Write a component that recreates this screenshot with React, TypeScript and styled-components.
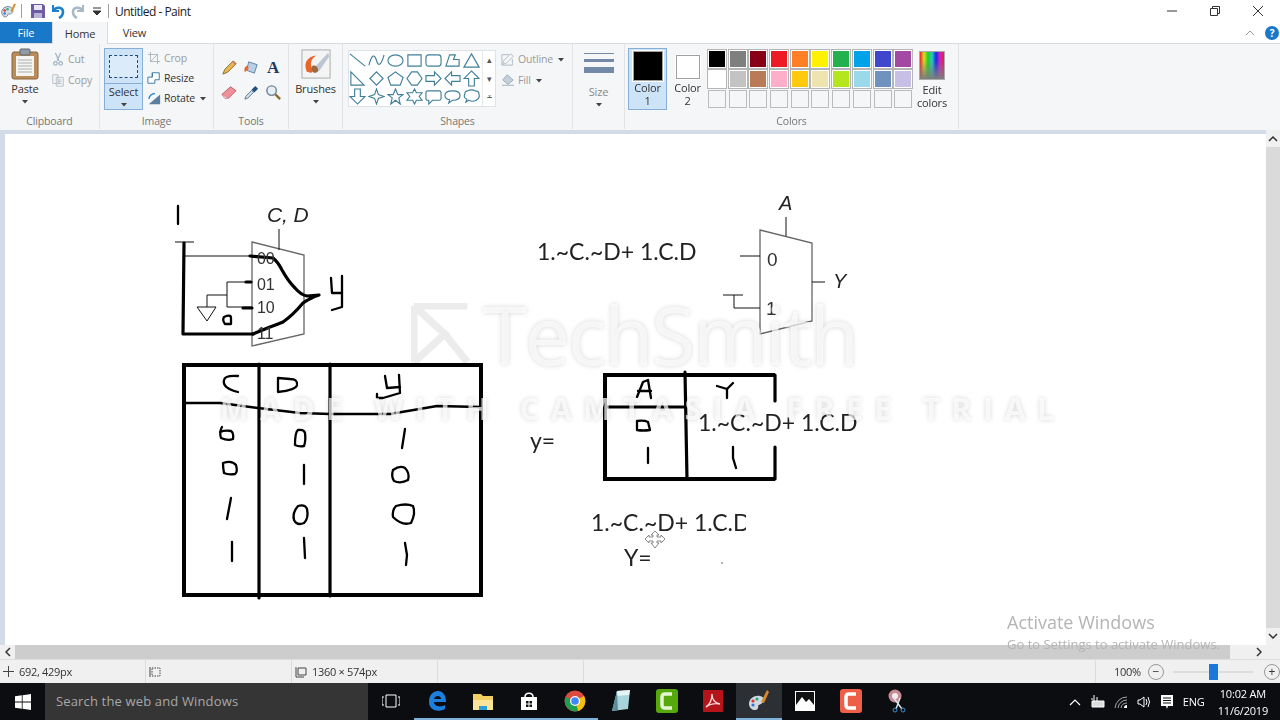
import React from 'react'
import styled, { createGlobalStyle } from 'styled-components'

const GlobalStyle = createGlobalStyle`
    html, body { margin: 0; padding: 0; background: #fff; overflow: hidden; }
    body { font-family: "Open Sans", "Noto Sans", "Liberation Sans", sans-serif; }
`

// @ Palette rows of the Colors group
const PALETTE = [
    '#000000', '#7f7f7f', '#880015', '#ed1c24', '#ff7f27', '#fff200', '#22b14c', '#00a2e8', '#3f48cc', '#a349a4',
    '#ffffff', '#c3c3c3', '#b97a57', '#ffaec9', '#ffc90e', '#efe4b0', '#b5e61d', '#99d9ea', '#7092be', '#c8bfe7',
    '', '', '', '', '', '', '', '', '', '',
]

// @ Shape gallery, each one is drawn in a 18x18 box
const SHAPES = [
    'M1 2L17 15',
    'M1 14C4 2 7 2 9 9S14 14 17 3',
    'M1 9a8 6 0 1 0 16 0a8 6 0 1 0-16 0Z',
    'M2 3H16V15H2Z',
    'M4 3H14Q17 3 17 6V12Q17 15 14 15H4Q1 15 1 12V6Q1 3 4 3Z',
    'M2 15L6 3H12L10 8H16V15Z',
    'M9 2L17 16H1Z',
    'M2 2V16H16Z',
    'M9 2L16 9L9 16L2 9Z',
    'M9 2L17 8L14 16H4L1 8Z',
    'M6 2H12L17 9L12 16H6L1 9Z',
    'M1 6H10V2L17 9L10 16V12H1Z',
    'M17 6H8V2L1 9L8 16V12H17Z',
    'M9 1L17 9H12V17H6V9H1Z',
    'M6 1H12V9H17L9 17L1 9H6Z',
    'M9 1L11 7L17 9L11 11L9 17L7 11L1 9L7 7Z',
    'M9 1L11.5 7H17L12.5 10.500L14 17L9 13L4 17L5.500 10.500L1 7H6.500Z',
    'M9 1L11 5H17L14 9L17 13H11L9 17L7 13H1L4 9L1 5H7Z',
    'M3 3H15Q17 3 17 5V11Q17 13 15 13H8L4 17V13H3Q1 13 1 11V5Q1 3 3 3Z',
    'M9 3C14 3 17 5 17 8S14 13 9 13L5 16L6 12.500C3 12 1 10 1 8C1 5 4 3 9 3Z',
    'M5 3Q9 1 13 3Q17 3 17 7Q18 11 14 13Q10 15 6 13L3 15L4 12Q0 10 2 6Q2 3 5 3Z',
]

// @ Hand written marks, in page coordinates
const THICK = [
    'M184 243L183 334L253 334',
    'M250 256L273 258Q278 262 282 270Q288 281 295 288Q301 295 307 296L319 295Q310 298 303 303Q293 315 283 322Q276 325 270 327L253 334',
    'M251 282H246', 'M252 308H243',
    'M259 364V598', 'M330 364V596',
    'M606 407H684', 'M685 372L687 479',
    'M775 375V401', 'M775 447V479',
]
const THIN_INK = [
    'M331 278L332 293H342', 'M342 276V307L332 310',
    'M238 376Q225 375 224 380Q222 388 238 392',
    'M278 378V392Q296 390 297 385Q298 379 290 379Z',
    'M385 376L387 388L400 387', 'M399 375L400 393L383 398H377V394',
    'M222 427Q219 432 221 438Q228 441 233 439Q234 433 231 431Q225 430 220 432',
    'M295 445Q295 432 298 430Q304 429 305 433Q306 441 304 446Q299 447 295 445Z',
    'M405 429L402 448',
    'M223 463Q232 460 236 465Q238 472 235 474Q228 475 224 473Q223 468 223 463Z',
    'M304 465V484',
    'M393 470Q400 465 405 468Q410 473 408 480Q401 484 394 481Q391 476 393 470Z',
    'M231 498L227 519',
    'M298 506Q305 504 307 509Q309 518 304 523Q297 526 294 520Q292 513 298 506Z',
    'M396 506Q406 503 413 506Q416 513 411 523Q402 526 393 517Q392 510 396 506Z',
    'M232 542V561',
    'M304 538L305 558',
    'M405 543L407 555L406 565',
    'M637 397L643 382L648 380L651 398', 'M638 391H651',
    'M717 386L727 389L733 383', 'M727 389V398',
    'M637 421Q644 420 648 422L650 430Q643 431 637 430Z',
    'M648 448V463',
    'M733 447V458L736 468',
    'M224 317Q231 314 231 318V324H225Q222 320 224 317Z',
    'M178 206V224',
    'M185 403H220L258 408L300 413L330 414H390L437 406L480 407',
]
const HAIR = [
    'M175 242H194', 'M184 256H252', 'M279 250V229',
    'M252 282H227V307H252', 'M227 295H207V307', 'M197 307H216L207 321Z',
    'M786 217V236', 'M740 256H760', 'M812 282H825',
    'M723 295H743', 'M734 295V308H760',
]

const LeftTitleIcons = () => (
    <>
        <QuickIcon $w={17} viewBox="0 0 18 18">
            <path d="M2 11C1 6 6 3 10 4S15 9 12 11S9 10 8 13S3 15 2 11Z" fill="#d8dfe8" stroke="#6a7c8e" />
            <circle cx="5" cy="8" r="1.300" fill="#d33" /><circle cx="8" cy="6.500" r="1.300" fill="#2a7" /><circle cx="5" cy="11" r="1.300" fill="#37c" />
            <path d="M12 9L16 1" stroke="#d88a2a" strokeWidth="2" />
        </QuickIcon>
        <TitleRule />
        <QuickIcon $w={16} viewBox="0 0 16 16">
            <path d="M1 1H13L15 3V15H1Z" fill="#6f5aa8" />
            <path d="M4 2H12V7H4Z" fill="#e8e8f2" /><path d="M4 10H12V15H4Z" fill="#b8b4d4" />
        </QuickIcon>
        <QuickIcon $w={16} viewBox="0 0 16 16">
            <path d="M3 2V8H9" fill="none" stroke="#1b80d0" strokeWidth="2" />
            <path d="M3 8C6 3 13 4 13 9C13 12 11 14 9 15" fill="none" stroke="#1b80d0" strokeWidth="2.600" />
        </QuickIcon>
        <QuickIcon $w={16} viewBox="0 0 16 16">
            <path d="M13 2V8H7" fill="none" stroke="#a9b8c6" strokeWidth="2" />
            <path d="M13 8C10 3 3 4 3 9C3 12 5 14 7 15" fill="none" stroke="#a9b8c6" strokeWidth="2.600" />
        </QuickIcon>
        <QuickIcon $w={8} $side={3} viewBox="0 0 8 8">
            <path d="M0 1H8M0 4H8L4 8Z" stroke="#333" fill="#333" />
        </QuickIcon>
        <TitleRule />
    </>
)

const Caret = () => (
    <CaretIcon viewBox="0 0 6 4"><path d="M0 0H6L3 3.500Z" fill="#444" /></CaretIcon>
)

const SmallAction = ({ icon, label, off, caret }: { icon: React.ReactNode; label: string; off?: boolean; caret?: boolean }) => (
    <ActionRow $off={off}>
        <ActionGlyph viewBox="0 0 16 16">{icon}</ActionGlyph>
        <span>{label}</span>
        {caret && <Caret />}
    </ActionRow>
)

const Ribbon = () => (
    <RibbonBar>
        <Group $w={100}>
            <GroupBody $pad="2px 0 0 4px">
                <BigTool $w={42}>
                    <BigGlyph viewBox="0 0 30 32">
                        <rect x="2" y="4" width="26" height="27" rx="2" fill="#b98d5b" stroke="#8a653a" />
                        <rect x="6" y="8" width="18" height="20" fill="#f6f4ee" />
                        <path d="M8 12H22M8 15H22M8 18H22M8 21H22M8 24H22" stroke="#a8b0b8" />
                        <rect x="10" y="1" width="10" height="6" rx="1" fill="#8f9aa5" stroke="#5d6670" />
                    </BigGlyph>
                    <span>Paste</span>
                    <Caret />
                </BigTool>
                <ActionStack $gap={4}>
                    <SmallAction off label="Cut" icon={<path d="M5 1L9 10M11 1L7 10M5 11a2 2 0 1 0 .1 0M11 11a2 2 0 1 0 .1 0" fill="none" stroke="#9db0c4" strokeWidth="1.400" />} />
                    <SmallAction off label="Copy" icon={<path d="M2 2H8V12H2ZM6 5H14V15H6ZM8 8H12M8 10H12M8 12H12" fill="#f3f5f7" stroke="#b5bdc6" />} />
                </ActionStack>
            </GroupBody>
            <GroupLabel>Clipboard</GroupLabel>
        </Group>
        <Group $w={114}>
            <GroupBody $pad="0 0 0 4px">
                <SelectTool>
                    <SelectTop><Marquee /></SelectTop>
                    <SelectBottom><span>Select</span><Caret /></SelectBottom>
                </SelectTool>
                <ActionStack $gap={3} $pad="5px 0 0 4px">
                    <SmallAction off label="Crop" icon={<path d="M4 1V12H15M1 4H12V15M4 12L12 4" fill="none" stroke="#a9b3bd" />} />
                    <SmallAction label="Resize" icon={<path d="M6 2H14V10H9V14H1V7H6ZM6 7V2" fill="#fff" stroke="#2f6f9f" />} />
                    <SmallAction caret label="Rotate" icon={<><path d="M2 15L15 4V15Z" fill="#5d7f9f" /><path d="M2 9C3 5 6 3 9 3" fill="none" stroke="#1b80d0" strokeWidth="1.500" /></>} />
                </ActionStack>
            </GroupBody>
            <GroupLabel>Image</GroupLabel>
        </Group>
        <Group $w={75}>
            <ToolGrid>
                <ToolIcon viewBox="0 0 18 18"><path d="M2 16L4 11L13 2L16 5L7 14Z" fill="#e8b850" stroke="#8a6a30" /><path d="M12 3L15 6L16 5L13 2Z" fill="#d66" /></ToolIcon>
                <ToolIcon viewBox="0 0 18 18"><path d="M6 3L15 6L12 15L4 12Z" fill="#b9cfe6" stroke="#62829f" /><path d="M5 7C1 8 1 12 2 14L6 10Z" fill="#e8662a" /></ToolIcon>
                <ToolLetter>A</ToolLetter>
                <ToolIcon viewBox="0 0 18 18"><path d="M1 11L10 3L16 7L8 15L4 15Z" fill="#ee8f9a" stroke="#b8606a" /><path d="M1 11L5 14L8 15L4 15Z" fill="#e6d0d0" /></ToolIcon>
                <ToolIcon viewBox="0 0 18 18"><path d="M2 16L3 13L9 7L11 9L5 15Z" fill="#cfe0ee" stroke="#60788c" /><path d="M9 6L13 2L16 5L12 9Z" fill="#21507f" /></ToolIcon>
                <ToolIcon viewBox="0 0 18 18"><circle cx="7" cy="7" r="5" fill="#e6eef6" stroke="#6f8296" strokeWidth="1.500" /><path d="M11 11L16 16" stroke="#8a6a30" strokeWidth="2.500" /></ToolIcon>
            </ToolGrid>
            <GroupLabel>Tools</GroupLabel>
        </Group>
        <Group $w={54}>
            <GroupBody $pad="2px 0 0 0">
                <BigTool $w={53}>
                    <BigGlyph viewBox="0 0 32 32">
                        <rect x="1" y="1" width="30" height="30" fill="#f4f4f4" stroke="#a8a8a8" />
                        <path d="M6 24C2 14 8 8 16 7C11 11 9 15 12 21C14 24 11 27 6 24Z" fill="#e8662a" />
                        <path d="M14 20L29 4L30 8L19 24Z" fill="#bcc6d2" />
                        <path d="M12 18C16 16 19 20 18 24C15 27 10 25 12 18Z" fill="#9b6a3a" />
                    </BigGlyph>
                    <span>Brushes</span>
                    <Caret />
                </BigTool>
            </GroupBody>
            <GroupLabel>&nbsp;</GroupLabel>
        </Group>
        <Group $w={230}>
            <GroupBody $pad="2px 0 0 5px">
                <Gallery>
                    <ShapeGrid>
                        {SHAPES.map((d, i) => (
                            <ShapeIcon key={i} viewBox="0 0 18 18"><path d={d} /></ShapeIcon>
                        ))}
                    </ShapeGrid>
                    <GalleryScroll>
                        <span>▴</span><span>▾</span><span>⩡</span>
                    </GalleryScroll>
                </Gallery>
                <ActionStack $gap={4} $pad="4px 0 0 5px">
                    <SmallAction off caret label="Outline" icon={<path d="M2 14L3 10L11 2L14 5L6 13ZM1 3H9M1 3V15H13V8" fill="none" stroke="#aab5c0" />} />
                    <SmallAction off caret label="Fill" icon={<path d="M7 2L14 8L8 13L2 8ZM1 14H15" fill="#c3cfdb" stroke="#9aa8b6" />} />
                </ActionStack>
            </GroupBody>
            <GroupLabel>Shapes</GroupLabel>
        </Group>
        <Group $w={52}>
            <GroupBody $pad="0">
                <SizeTool>
                    <SizeLines>
                        <SizeLine $h={1} /><SizeLine $h={3} /><SizeLine $h={6} />
                    </SizeLines>
                    <span>Size</span>
                    <Caret />
                </SizeTool>
            </GroupBody>
            <GroupLabel>&nbsp;</GroupLabel>
        </Group>
        <Group $w={334}>
            <GroupBody $pad="0 0 0 3px">
                <ColorPick $on>
                    <ColorWell $size={28} $fill="#000000" />
                    <span>Color<br />1</span>
                </ColorPick>
                <ColorPick>
                    <ColorWell $size={22} $fill="#ffffff" />
                    <span>Color<br />2</span>
                </ColorPick>
                <Palette>
                    {PALETTE.map((c, i) => <Swatch key={i} $fill={c} />)}
                </Palette>
                <EditColors>
                    <Spectrum />
                    <span>Edit<br />colors</span>
                </EditColors>
            </GroupBody>
            <GroupLabel>Colors</GroupLabel>
        </Group>
    </RibbonBar>
)

const Drawing = () => (
    <Sheet viewBox="0 134 1261 510">
        <g fill="none" stroke="#000" strokeWidth="4">
            <path d="M184 365H481V595H184Z" />
            <path d="M775 375H605V479H775" />
        </g>
        <g fill="none" stroke="#666" strokeWidth="1.300">
            <path d="M252 242L304 255V334L252 346Z" />
            <path d="M760 230L812 243V321L760 334Z" />
        </g>
        <g fill="none" stroke="#111" strokeWidth="1" >
            {HAIR.map((d, i) => <path key={i} d={d} />)}
        </g>
        <g fill="none" stroke="#000" strokeWidth="3.200" strokeLinejoin="round" strokeLinecap="round">
            {THICK.map((d, i) => <path key={i} d={d} />)}
        </g>
        <g fill="none" stroke="#000" strokeWidth="2.300" strokeLinejoin="round" strokeLinecap="round">
            {THIN_INK.map((d, i) => <path key={i} d={d} />)}
        </g>
        <PinLabel x="257" y="264">00</PinLabel>
        <PinLabel x="257" y="290">01</PinLabel>
        <PinLabel x="257" y="313">10</PinLabel>
        <PinLabel x="257" y="339">11</PinLabel>
        <PinLabel x="767" y="266" $size={19}>0</PinLabel>
        <PinLabel x="766" y="315" $size={19}>1</PinLabel>
        <SignalLabel x="267" y="222" $size={21}>C, D</SignalLabel>
        <SignalLabel x="779" y="210">A</SignalLabel>
        <SignalLabel x="833" y="288">Y</SignalLabel>
        <Formula x="537" y="260">1.~C.~D+ 1.C.D</Formula>
        <Formula x="698" y="431">1.~C.~D+ 1.C.D</Formula>
        <Formula x="591" y="531">1.~C.~D+ 1.C.D</Formula>
        <Formula x="530" y="449">y=</Formula>
        <Formula x="624" y="566">Y=</Formula>
        <rect x="746" y="512" width="8" height="26" fill="#fff" />
        <circle cx="722" cy="563" r="0.800" fill="#555" />
        <path d="M655 531L659 535H657V537H661V535L665 539L661 543V541H657V543H659L655 548L651 543H653V541H649V543L645 539L649 535V537H653V535H651Z" fill="#fff" stroke="#888" />
    </Sheet>
)

const Taskbar = () => (
    <TaskbarRow>
        <StartSlot>
            <svg width="16" height="16" viewBox="0 0 16 16"><path d="M0 2.300L6.800 1.300V7.600H0ZM7.600 1.200L16 0V7.600H7.600ZM0 8.400H6.800V14.700L0 13.700ZM7.600 8.400H16V16L7.600 14.800Z" fill="#fff" /></svg>
        </StartSlot>
        <SearchBox>Search the web and Windows</SearchBox>
        <TaskSlot>
            <svg width="18" height="14" viewBox="0 0 18 14"><path d="M4 1H14V13H4ZM2 3H0V11H2M16 3H18V11H16" fill="none" stroke="#fff" /></svg>
        </TaskSlot>
        <TaskSlot $run>
            <svg width="20" height="22" viewBox="0 0 20 22"><path d="M2 12C2 5 6 1 11 1C16 1 19 5 19 12H7C7 16 13 18 18 15V19C11 23 2 20 2 12ZM7 9H14C14 5 8 5 7 9Z" fill="#1b7fe0" /></svg>
        </TaskSlot>
        <TaskSlot $run>
            <svg width="20" height="20" viewBox="0 0 20 20"><path d="M0 3H8L10 5H20V19H0Z" fill="#f3cf62" /><path d="M0 9H20V19H14V15H6V19H0Z" fill="#fbe49a" /><path d="M6 15H14V19H6Z" fill="#2a9fd8" /></svg>
        </TaskSlot>
        <TaskSlot $run>
            <svg width="18" height="20" viewBox="0 0 18 20"><path d="M1 6H17V19H1Z" fill="#fff" /><path d="M5 6C5 1 13 1 13 6" fill="none" stroke="#fff" strokeWidth="1.500" /><path d="M6 10H8.500V12.500H6ZM9.500 10H12V12.500H9.500ZM6 13.500H8.500V16H6ZM9.500 13.500H12V16H9.500Z" fill="#111" /></svg>
        </TaskSlot>
        <TaskSlot $run>
            <svg width="22" height="22" viewBox="0 0 22 22">
                <circle cx="11" cy="11" r="10.500" fill="#dd4b3e" />
                <path d="M11 11L20 6A10.500 10.500 0 0 1 14 21Z" fill="#f4c20d" />
                <path d="M11 11L14 21A10.500 10.500 0 0 1 1.500 7Z" fill="#1e9e50" />
                <circle cx="11" cy="11" r="5" fill="#fff" /><circle cx="11" cy="11" r="3.800" fill="#4285f4" />
            </svg>
        </TaskSlot>
        <TaskSlot>
            <svg width="20" height="24" viewBox="0 0 20 24"><path d="M6 2L19 1L17 20L1 22Z" fill="#a9d4dc" /><path d="M6 2L19 1L18 6L5 7Z" fill="#e6f3f5" /><path d="M1 22L6 2L7 21Z" fill="#5b8f9c" /></svg>
        </TaskSlot>
        <TaskSlot>
            <svg width="22" height="24" viewBox="0 0 22 24"><rect width="22" height="24" rx="3" fill="#56a80c" /><path d="M16 5H9Q6 5 6 8V16Q6 19 9 19H16" fill="none" stroke="#e4f5d2" strokeWidth="3.500" /></svg>
        </TaskSlot>
        <TaskSlot>
            <svg width="20" height="22" viewBox="0 0 20 22"><rect width="20" height="22" rx="1" fill="#b3151b" /><path d="M3 17C7 15 9 9 9 4C9 9 12 13 17 14C12 13 7 14 3 17Z" fill="none" stroke="#f6d6d6" strokeWidth="1.400" /></svg>
        </TaskSlot>
        <TaskSlot $active>
            <svg width="22" height="24" viewBox="0 0 22 24">
                <path d="M1 15C1 9 7 6 12 7S17 13 13 15S11 15 10 19S1 21 1 15Z" fill="#cfd8e2" />
                <circle cx="5" cy="12" r="1.600" fill="#d33" /><circle cx="9" cy="10" r="1.600" fill="#2a7" /><circle cx="5" cy="16" r="1.600" fill="#37c" />
                <path d="M13 13L19 1L21 3L16 14Z" fill="#d88a2a" />
            </svg>
        </TaskSlot>
        <TaskSlot>
            <svg width="20" height="20" viewBox="0 0 20 20"><rect width="20" height="20" fill="#fff" /><rect x="1" y="1" width="18" height="18" fill="#111" /><path d="M1 19V14L7 6L11 11L14 8L19 14V19Z" fill="#fff" /></svg>
        </TaskSlot>
        <TaskSlot>
            <svg width="22" height="24" viewBox="0 0 22 24"><rect width="22" height="24" rx="3" fill="#ee5f47" /><path d="M16 5H9Q6 5 6 8V16Q6 19 9 19H16" fill="none" stroke="#fff" strokeWidth="3.500" /></svg>
        </TaskSlot>
        <TaskSlot>
            <svg width="20" height="24" viewBox="0 0 20 24">
                <circle cx="8" cy="7" r="6.500" fill="#c88a94" /><circle cx="8" cy="7" r="3" fill="#eee" />
                <path d="M6 8L15 20M13 9L9 20" stroke="#dfe6ec" strokeWidth="1.400" />
                <circle cx="8" cy="21" r="2" fill="none" stroke="#3d8fd0" /><circle cx="16" cy="21" r="2" fill="none" stroke="#3d8fd0" />
            </svg>
        </TaskSlot>
        <Tray>
            <TrayIcon viewBox="0 0 14 14"><path d="M2 10L7 5L12 10" fill="none" stroke="#fff" strokeWidth="1.200" /></TrayIcon>
            <TrayIcon viewBox="0 0 14 14"><path d="M1 6H13V12H1ZM3 2V6M6 2V6M4 1H2M2 4H0" fill="#ddd" stroke="#fff" /></TrayIcon>
            <TrayIcon viewBox="0 0 14 14"><path d="M1 13A12 12 0 0 1 13 2M4 13A9 9 0 0 1 13 5M7 13A6 6 0 0 1 13 8" fill="none" stroke="#aaa" /><path d="M10 13A3 3 0 0 1 13 10V13Z" fill="#fff" /></TrayIcon>
            <TrayIcon viewBox="0 0 14 14"><path d="M1 5H3L7 2V12L3 9H1ZM9 4Q11 7 9 10M11 2Q14 7 11 12" fill="none" stroke="#fff" /></TrayIcon>
            <TrayIcon viewBox="0 0 14 14"><path d="M1 0H13V11H8L7 14L6 11H1Z" fill="#fff" /><path d="M3 3H11M3 5.500H11M3 8H11" stroke="#111" /></TrayIcon>
            <TrayText>ENG</TrayText>
            <Clock>10:02 AM<br />11/6/2019</Clock>
        </Tray>
    </TaskbarRow>
)

const App = () => {
    return (
        <Page>
            <GlobalStyle />
            <TitleBar>
                <LeftTitleIcons />
                <TitleText>Untitled - Paint</TitleText>
                <WindowButtons>
                    <WinGlyph viewBox="0 0 12 12"><path d="M1 6H11" stroke="#333" /></WinGlyph>
                    <WinGlyph viewBox="0 0 12 12"><path d="M1.500 3.500H8.500V10.500H1.500ZM3.500 3.500V1.500H10.500V8.500H8.500" fill="none" stroke="#333" /></WinGlyph>
                    <WinGlyph viewBox="0 0 12 12"><path d="M1 1L11 11M11 1L1 11" stroke="#333" /></WinGlyph>
                </WindowButtons>
            </TitleBar>
            <TabRow>
                <FileTab>File</FileTab>
                <HomeTab>Home</HomeTab>
                <ViewTab>View</ViewTab>
                <TabEnd>
                    <svg width="10" height="6" viewBox="0 0 10 6"><path d="M1 5L5 1L9 5" fill="none" stroke="#999" /></svg>
                    <HelpDot>?</HelpDot>
                </TabEnd>
            </TabRow>
            <Ribbon />
            <Workspace>
                <CanvasColumn>
                    <Canvas><Drawing /></Canvas>
                    <VScroll>
                        <svg width="10" height="6" viewBox="0 0 10 6"><path d="M1 5L5 1L9 5" fill="none" stroke="#333" strokeWidth="1.500" /></svg>
                        <VThumb />
                        <svg width="10" height="6" viewBox="0 0 10 6"><path d="M1 1L5 5L9 1" fill="none" stroke="#333" strokeWidth="1.500" /></svg>
                    </VScroll>
                </CanvasColumn>
                <HScroll>
                    <svg width="6" height="10" viewBox="0 0 6 10"><path d="M5 1L1 5L5 9" fill="none" stroke="#333" strokeWidth="1.500" /></svg>
                    <HThumb />
                    <svg width="6" height="10" viewBox="0 0 6 10"><path d="M1 1L5 5L1 9" fill="none" stroke="#333" strokeWidth="1.500" /></svg>
                </HScroll>
            </Workspace>
            <StatusBar>
                <StatusCell>
                    <svg width="11" height="11" viewBox="0 0 11 11"><path d="M5.500 0V11M0 5.500H11" stroke="#444" /></svg>
                    692, 429px
                </StatusCell>
                <StatusCell>
                    <svg width="12" height="12" viewBox="0 0 12 12"><path d="M3 2H11V10H3Z" fill="none" stroke="#444" strokeDasharray="1.500 1" /><path d="M1 1V11" stroke="#444" /></svg>
                </StatusCell>
                <StatusCell>
                    <svg width="12" height="12" viewBox="0 0 12 12"><path d="M3 2H11V9H3Z" fill="none" stroke="#444" /><path d="M1 1V11H9" fill="none" stroke="#444" /></svg>
                    1360 × 574px
                </StatusCell>
                <StatusCell />
                <ZoomBox>
                    <span>100%</span>
                    <ZoomRound>−</ZoomRound>
                    <ZoomTrack><ZoomThumb /></ZoomTrack>
                    <ZoomRound>+</ZoomRound>
                </ZoomBox>
            </StatusBar>
            <Taskbar />
            <Watermark>
                <MarkLogo viewBox="0 0 66 66">
                    <path d="M3 3H60M3 3V63M3 3L36 33L3 63" fill="none" stroke="#000" strokeWidth="8" />
                    <path d="M36 33L60 63" fill="none" stroke="#000" strokeWidth="8" />
                </MarkLogo>
                <MarkName>TechSmith</MarkName>
                <MarkLine>MADE WITH CAMTASIA FREE TRIAL</MarkLine>
            </Watermark>
            <ActivateNote>
                <strong>Activate Windows</strong>
                <small>Go to Settings to activate Windows.</small>
            </ActivateNote>
        </Page>
    )
}

export default App

const Page = styled.div`
    position: relative;
    width: 1280px;
    height: 720px;
    overflow: hidden;
    display: flex;
    flex-direction: column;
    color: #333;
    font-size: 11px;
    letter-spacing: -0.150px;
    filter: blur(0.35px);
`

const TitleBar = styled.div`
    height: 22px;
    display: flex;
    align-items: center;
    gap: 4px;
    background: #fff;
`

const QuickIcon = styled.svg<{ $w: number; $side?: number }>`
    width: ${p => p.$w}px;
    height: ${p => p.$w}px;
    margin: 0 ${p => p.$side || 0}px;
`

const TitleRule = styled.i`
    width: 1px;
    height: 14px;
    background: #a0a0a0;
    margin-right: 4px;
`

const TitleText = styled.span`
    font-size: 12px;
    color: #222;
    margin-left: -2px;
    letter-spacing: -0.500px;
`

const WindowButtons = styled.div`
    margin-left: auto;
    display: flex;
    gap: 31px;
    padding-right: 16px;
`

const WinGlyph = styled.svg`
    width: 12px;
    height: 12px;
`

const TabRow = styled.div`
    height: 21px;
    display: flex;
    align-items: stretch;
    background: #fff;
    border-bottom: 1px solid #dadbdc;
    font-size: 11px;
`

const FileTab = styled.div`
    width: 52px;
    background: #1a78c8;
    color: #fff;
    display: flex;
    align-items: center;
    justify-content: center;
`

const HomeTab = styled.div`
    width: 54px;
    margin-bottom: -1px;
    background: #f5f6f7;
    border: solid #dadbdc;
    border-width: 0 1px;
    display: flex;
    align-items: center;
    justify-content: center;
`

const ViewTab = styled.div`
    width: 53px;
    display: flex;
    align-items: center;
    justify-content: center;
`

const TabEnd = styled.div`
    margin-left: auto;
    display: flex;
    align-items: center;
    gap: 10px;
    margin-right: 1px;
`

const HelpDot = styled.span`
    width: 14px;
    height: 14px;
    border-radius: 50%;
    background: #1a78c8;
    color: #fff;
    font-weight: 700;
    font-size: 10px;
    text-align: center;
    line-height: 14px;
`

const RibbonBar = styled.div`
    height: 86px;
    display: flex;
    background: #f5f6f7;
`

const Group = styled.div<{ $w: number }>`
    width: ${p => p.$w}px;
    box-sizing: border-box;
    display: flex;
    flex-direction: column;
    border-right: 1px solid #e2e3e4;
    margin-bottom: 1px;
`

const GroupBody = styled.div<{ $pad: string }>`
    flex: 1;
    display: flex;
    align-items: flex-start;
    padding: ${p => p.$pad};
    min-height: 0;
`

const GroupLabel = styled.div`
    height: 15px;
    line-height: 14px;
    text-align: center;
    color: #767676;
    font-size: 10.500px;
`

const BigTool = styled.div<{ $w: number }>`
    width: ${p => p.$w}px;
    display: flex;
    flex-direction: column;
    align-items: center;
    line-height: 14px;
    padding-top: 2px;
`

const BigGlyph = styled.svg`
    width: 30px;
    height: 32px;
    margin-bottom: 2px;
`

const CaretIcon = styled.svg`
    width: 6px;
    height: 4px;
    margin: 4px 0 0 0;
    flex: none;
`

const ActionStack = styled.div<{ $gap: number; $pad?: string }>`
    display: flex;
    flex-direction: column;
    gap: ${p => p.$gap}px;
    padding: ${p => p.$pad || '4px 0 0 5px'};
`

const ActionRow = styled.div<{ $off?: boolean }>`
    height: 17px;
    display: flex;
    align-items: center;
    gap: 3px;
    color: ${p => (p.$off ? '#9a9a9a' : '#333')};
    font-size: 10.500px;
    svg:last-child { margin: 2px 0 0 2px; }
`

const ActionGlyph = styled.svg`
    width: 14px;
    height: 14px;
    flex: none;
`

const SelectTool = styled.div`
    width: 39px;
    height: 62px;
    box-sizing: border-box;
    border: 1px solid #86afd8;
    background: #cde4f8;
    margin-top: 4px;
    display: flex;
    flex-direction: column;
`

const SelectTop = styled.div`
    height: 34px;
    border-bottom: 1px solid #86afd8;
    display: flex;
    align-items: center;
    justify-content: center;
`

const Marquee = styled.div`
    width: 27px;
    height: 21px;
    border: 1px dashed #244a78;
    background: #dcebf9;
`

const SelectBottom = styled.div`
    flex: 1;
    display: flex;
    flex-direction: column;
    align-items: center;
    padding-top: 0;
    line-height: 15px;
`

const ToolGrid = styled.div`
    flex: 1;
    display: grid;
    grid-template-columns: repeat(3, 22px);
    grid-template-rows: repeat(2, 25px);
    justify-content: center;
    align-content: start;
    padding-top: 11px;
    align-items: center;
    justify-items: center;
`

const ToolIcon = styled.svg`
    width: 17px;
    height: 17px;
`

const ToolLetter = styled.span`
    font-family: "Liberation Serif", serif;
    font-weight: 700;
    font-size: 17px;
    color: #1f3a5f;
`

const Gallery = styled.div`
    width: 148px;
    height: 57px;
    margin-top: 4px;
    box-sizing: border-box;
    background: #fff;
    border: 1px solid #dfe3e8;
    display: flex;
`

const ShapeGrid = styled.div`
    width: 133px;
    display: grid;
    grid-template-columns: repeat(7, 19px);
    grid-auto-rows: 18px;
    align-content: center;
`

const ShapeIcon = styled.svg`
    width: 17px;
    height: 17px;
    fill: none;
    stroke: #3f7f98;
    stroke-width: 1.200;
`

const GalleryScroll = styled.div`
    flex: 1;
    border-left: 1px solid #e7e9ec;
    display: flex;
    flex-direction: column;
    align-items: center;
    justify-content: space-between;
    font-size: 9px;
    line-height: 18px;
    color: #555;
`

const SizeTool = styled.div`
    flex: 1;
    display: flex;
    flex-direction: column;
    align-items: center;
    padding-top: 9px;
    color: #888;
    line-height: 14px;
`

const SizeLines = styled.div`
    width: 30px;
    height: 29px;
    margin-bottom: 3px;
    display: flex;
    flex-direction: column;
    gap: 5px;
`

const SizeLine = styled.i<{ $h: number }>`
    display: block;
    height: ${p => p.$h}px;
    background: #7488a8;
`

const ColorPick = styled.div<{ $on?: boolean }>`
    width: 39px;
    height: 62px;
    margin: 4px 1px 0 0;
    box-sizing: border-box;
    border: 1px solid ${p => (p.$on ? '#86afd8' : 'transparent')};
    background: ${p => (p.$on ? '#cde4f8' : 'transparent')};
    display: flex;
    flex-direction: column;
    align-items: center;
    text-align: center;
    line-height: 13px;
    span { margin-top: auto; margin-bottom: 2px; }
`

const ColorWell = styled.div<{ $size: number; $fill: string }>`
    width: ${p => p.$size}px;
    height: ${p => p.$size}px;
    margin-top: ${p => (p.$size === 28 ? 2 : 6)}px;
    background: ${p => p.$fill};
    border: 1px solid #a0a0a0;
    outline: 1px solid #fff;
`

const Palette = styled.div`
    width: 207px;
    margin-top: 6px;
    display: grid;
    grid-template-columns: repeat(10, 18px);
    grid-auto-rows: 18px;
    column-gap: 2.700px;
    row-gap: 2.200px;
`

const Swatch = styled.i<{ $fill: string }>`
    display: block;
    box-sizing: border-box;
    background: ${p => p.$fill || 'transparent'};
    border: ${p => (p.$fill ? '1px solid #fff' : '1px solid #bbb')};
    box-shadow: ${p => (p.$fill ? '0 0 0 1px #b5b5b5' : 'none')};
`

const EditColors = styled.div`
    width: 32px;
    margin: 7px 0 0 1px;
    display: flex;
    flex-direction: column;
    align-items: center;
    text-align: center;
    line-height: 13px;
    span { margin-top: 3px; }
`

const Spectrum = styled.div`
    width: 26px;
    height: 29px;
    border: 1px solid #aaa;
    box-sizing: border-box;
    background:
        linear-gradient(180deg, transparent 30%, #7d7d7d 100%),
        linear-gradient(90deg, #e22, #dd2, #2c2, #2cc, #22d, #c2c, #e22);
`

const Workspace = styled.div`
    flex: 1;
    min-height: 0;
    display: flex;
    flex-direction: column;
`

const CanvasColumn = styled.div`
    flex: 1;
    min-height: 0;
    display: flex;
    padding-left: 5px;
    background: #d3dbe8;
`

const Canvas = styled.div`
    flex: 1;
    margin-top: 4px;
    background: #fff;
    min-width: 0;
`

const Sheet = styled.svg`
    display: block;
    width: 1261px;
    height: 510px;
    margin-left: -5px;
`

const PinLabel = styled.text<{ $size?: number }>`
    font-family: "Liberation Sans", sans-serif;
    font-size: ${p => p.$size || 16}px;
    fill: #333;
`

const SignalLabel = styled.text<{ $size?: number }>`
    font-family: "Liberation Sans", sans-serif;
    font-style: italic;
    font-size: ${p => p.$size || 20}px;
    fill: #222;
`

const Formula = styled.text`
    font-family: Lato, "Open Sans", sans-serif;
    font-size: 23px;
    letter-spacing: 0;
    fill: #222;
`

const VScroll = styled.div`
    width: 14px;
    background: #f0f0f0;
    display: flex;
    flex-direction: column;
    align-items: center;
    gap: 5px;
    padding: 6px 0 6px;
    box-sizing: border-box;
`

const VThumb = styled.div`
    flex: 1;
    align-self: stretch;
    background: #dadada;
`

const HScroll = styled.div`
    height: 14px;
    background: #f0f0f0;
    display: flex;
    align-items: center;
    padding: 0 18px 0 5px;
    gap: 4px;
`

const HThumb = styled.div`
    flex: 0 0 1215px;
    height: 14px;
    margin-right: auto;
    background: #cdcdcd;
`

const StatusBar = styled.div`
    height: 24px;
    display: flex;
    background: #f0f0f0;
    border-top: 1px solid #dedede;
    box-sizing: border-box;
    color: #333;
    font-size: 11px;
    letter-spacing: -0.300px;
`

const StatusCell = styled.div`
    width: 146px;
    box-sizing: border-box;
    border-right: 1px solid #dcdcdc;
    display: flex;
    align-items: center;
    gap: 5px;
    padding-left: 3px;
`

const ZoomBox = styled.div`
    margin-left: auto;
    width: 185px;
    box-sizing: border-box;
    border-left: 1px solid #dcdcdc;
    display: flex;
    align-items: center;
    padding-left: 18px;
`

const ZoomRound = styled.span`
    width: 14px;
    height: 14px;
    margin-left: 7px;
    flex: none;
    border-radius: 50%;
    border: 1px solid #999;
    text-align: center;
    line-height: 13px;
    font-size: 12px;
`

const ZoomTrack = styled.div`
    position: relative;
    width: 80px;
    height: 2px;
    margin: 0 4px 0 9px;
    background: #dcdcdc;
`

const ZoomThumb = styled.i`
    position: absolute;
    left: 36px;
    top: -7px;
    width: 9px;
    height: 16px;
    background: #1a78d8;
`

const TaskbarRow = styled.div`
    height: 37px;
    display: flex;
    background: #0b0d10;
`

const StartSlot = styled.div`
    width: 45px;
    display: flex;
    align-items: center;
    justify-content: center;
`

const SearchBox = styled.div`
    width: 323px;
    background: #353535;
    color: #a8a8a8;
    font-size: 13px;
    letter-spacing: 0.150px;
    line-height: 37px;
    padding-left: 11px;
    box-sizing: border-box;
`

const TaskSlot = styled.div<{ $run?: boolean; $active?: boolean }>`
    width: 46px;
    display: flex;
    align-items: center;
    justify-content: center;
    box-sizing: border-box;
    background: ${p => (p.$active ? '#2c2f33' : 'transparent')};
    border-bottom: 2px solid ${p => (p.$active || p.$run ? '#7fb2d8' : 'transparent')};
`

const Tray = styled.div`
    margin-left: auto;
    display: flex;
    align-items: center;
    gap: 9px;
    padding-right: 12px;
    color: #fff;
`

const TrayIcon = styled.svg`
    width: 14px;
    height: 14px;
`

const TrayText = styled.span`
    font-size: 11px;
    margin: 0 4px 0 0;
`

const Clock = styled.div`
    font-size: 11px;
    line-height: 17px;
    text-align: center;
    letter-spacing: -0.200px;
`

const Watermark = styled.div`
    position: absolute;
    left: 0;
    top: 296px;
    width: 1280px;
    height: 135px;
    pointer-events: none;
`

const MarkLogo = styled.svg`
    position: absolute;
    left: 411px;
    top: 7px;
    width: 62px;
    height: 62px;
    opacity: 0.07;
`

const MarkName = styled.div`
    position: absolute;
    left: 483px;
    top: -17px;
    font-family: "Open Sans", sans-serif;
    font-weight: 400;
    font-size: 80px;
    letter-spacing: -2px;
    color: rgba(255, 255, 255, 0.7);
    text-shadow: 0 0 5px rgba(0, 0, 0, 0.16);
`

const MarkLine = styled.div`
    position: absolute;
    left: 220px;
    top: 92px;
    white-space: nowrap;
    font-family: "Open Sans", sans-serif;
    font-weight: 700;
    font-size: 30px;
    letter-spacing: 11.700px;
    color: rgba(255, 255, 255, 0.7);
    text-shadow: 0 0 5px rgba(0, 0, 0, 0.16);
`

const ActivateNote = styled.div`
    position: absolute;
    left: 1007px;
    top: 611px;
    display: flex;
    flex-direction: column;
    color: #b4b4b4;
    letter-spacing: 0;
    strong { font-weight: 400; font-size: 18px; line-height: 22px; }
    small { font-size: 13px; line-height: 20px; margin-top: 1px; white-space: nowrap; }
`
